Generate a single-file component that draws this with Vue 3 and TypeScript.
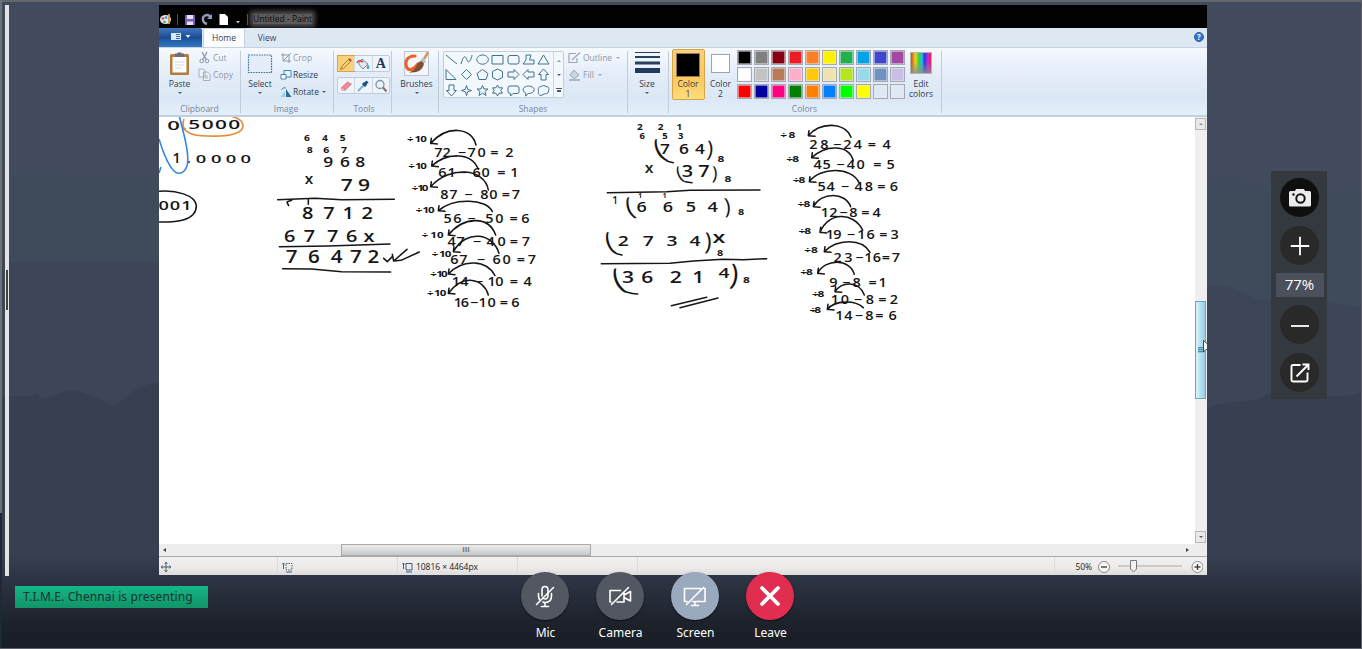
<script setup lang="ts">
interface Glyphs {
  t: string
  x: number[]
  y: number
  h: number
  w: number
  bold: boolean
}
interface Paren {
  t: string
  x: number
  y: number
  s: number
  r: number
}
interface Block {
  ox: number
  oy: number
  runs: Glyphs[]
  arcs: number[][]
  lines: string[]
  parens: Paren[]
}

const run = (t: string, x: number[], y: number, h = 26, w = 1.2): Glyphs => ({ t, x, y, h, w, bold: h < 22 })
const div10 = (a: number, b: number, y: number): Glyphs =>
  run('÷10', [a + 9, a + (b - a) * 0.54, b - 9], y, 20, 1.25)
const div8 = (a: number, b: number, y: number): Glyphs => run('÷8', [a + 11, b - 9], y, 20, 1.3)

const blocks: Block[] = [
  {
    ox: 155,
    oy: 115,
    runs: [
      run('0', [56], 45, 28, 1.7),
      run('.', [88], 45, 28, 1.2),
      run('5000', [118, 158, 198, 238], 43, 25, 1.8),
      run('1', [65], 144, 31, 1),
      run('.', [101], 144, 26, 1.2),
      run('0000', [138, 184, 228, 272], 144, 22, 1.8),
      run('001', [26, 60, 94], 284, 28, 1.4),
      run('645', [456, 510, 563], 79, 17, 1.3),
      run('867', [464, 514, 567], 113, 19, 1.2),
      run('968', [520, 570, 616], 156, 30, 1.25),
      run('x', [462], 206, 30, 1.1),
      run('79', [575, 627], 227, 35, 1.3),
      run('8712', [458, 522, 580, 637], 312, 36, 1.2),
      run('6776x', [404, 463, 533, 590, 642], 382, 33, 1.3),
      run('76472', [410, 477, 545, 603, 655], 445, 37, 1.2),
    ],
    arcs: [],
    lines: [
      'M368 254 L480 250 L560 254 L718 253',
      'M396 262 L401 272 M397 260 L410 256 M460 252 V268',
      'M373 395 L520 393 L705 387',
      'M383 461 L470 462 L560 470 L707 471',
      'M686 430 L697 440 L712 425 M712 418 L716 438 L756 403 M716 438 L738 436 L793 411',
      'M12 229 C60 224 122 240 124 272 C124 318 62 322 12 321',
    ],
    parens: [],
  },
  {
    ox: 400,
    oy: 120,
    runs: [
      div10(22, 80, 66), div10(26, 80, 148), div10(36, 84, 213), div10(48, 103, 280),
      div10(66, 130, 355), div10(96, 153, 412), div10(92, 142, 470), div10(82, 138, 528),
      run('72−70=2', [115, 140, 187, 215, 245, 283, 328], 110),
      run('61−60=1', [127, 155, 190, 230, 257, 304, 343], 171),
      run('87−80=7', [133, 160, 207, 253, 280, 318, 348], 237),
      run('56−50=6', [143, 172, 216, 268, 298, 341, 376], 310),
      run('47−40=7', [155, 182, 232, 272, 305, 342, 378], 377),
      run('67−60=7', [163, 190, 244, 290, 320, 363, 396], 431),
      run('14−10=4', [168, 193, 238, 275, 298, 342, 383], 498),
      run('16−10=6', [174, 195, 224, 248, 275, 312, 346], 561),
    ],
    arcs: [
      [228, 75, 215, 20, 140, 15, 92, 70],
      [235, 148, 215, 95, 140, 97, 95, 138],
      [265, 210, 255, 145, 150, 135, 92, 200],
      [277, 275, 260, 235, 160, 232, 115, 272],
      [287, 345, 265, 285, 190, 290, 145, 345],
      [297, 400, 280, 340, 200, 325, 160, 395],
      [285, 467, 260, 420, 190, 415, 145, 462],
      [265, 525, 250, 475, 190, 460, 145, 520],
    ],
    lines: [],
    parens: [],
  },
  {
    ox: 590,
    oy: 115,
    runs: [
      run('221', [150, 212, 268], 46, 18, 1.2),
      run('653', [157, 225, 272], 73, 17, 1.2),
      run('764', [225, 282, 330], 116, 31),
      run('8', [393], 142, 20, 1.3),
      run('x', [177], 175, 31, 1.1),
      run('37', [292, 342], 186, 33, 1.3),
      run('8', [414], 201, 20, 1.3),
      run('1', [75], 267, 24, 0.9),
      run('11', [150, 224], 250, 14, 1),
      run('6654', [155, 234, 303, 368], 292, 30, 1.3),
      run('8', [453], 300, 18, 1.3),
      run('2734', [100, 175, 246, 315], 392, 32, 1.3),
      run('x', [387], 384, 36, 1.4),
      run('8', [390], 422, 18, 1.3),
      run('3621', [114, 172, 257, 325], 503, 35, 1.3),
      run('4', [402], 488, 32, 1.3),
      run('8', [469], 504, 20, 1.3),
    ],
    arcs: [],
    lines: [
      'M52 233 L230 230 L300 226 L510 225',
      'M34 446 L240 445 L310 438 L400 433 L460 434 L530 431',
      'M244 572 L350 547 M270 578 L384 549',
      'M232 139 L250 143 M286 200 L306 203 M80 416 L96 420 M112 532 Q126 537 143 537',
    ],
    parens: [
      { t: '(', x: 209, y: 108, s: 84, r: -28 },
      { t: ')', x: 360, y: 106, s: 66, r: 4 },
      { t: '(', x: 270, y: 179, s: 58, r: -24 },
      { t: ')', x: 374, y: 178, s: 56, r: 2 },
      { t: '(', x: 120, y: 280, s: 76, r: -20 },
      { t: ')', x: 412, y: 278, s: 66, r: -4 },
      { t: '(', x: 60, y: 386, s: 80, r: -22 },
      { t: ')', x: 354, y: 384, s: 72, r: 2 },
      { t: '(', x: 86, y: 500, s: 92, r: -26 },
      { t: ')', x: 432, y: 484, s: 86, r: 6 },
    ],
  },
  {
    ox: 770,
    oy: 115,
    runs: [
      div8(30, 75, 70), div8(48, 86, 142), div8(68, 105, 203), div8(82, 120, 275),
      div8(85, 122, 358), div8(102, 142, 415), div8(90, 127, 480), div8(125, 162, 547),
      div8(118, 152, 593),
      run('28−24=4', [130, 163, 203, 232, 264, 306, 350], 101),
      run('45−40=5', [143, 170, 213, 243, 272, 322, 362], 161),
      run('54−48=6', [155, 182, 226, 266, 297, 334, 372], 229),
      run('12−8=4', [165, 190, 222, 250, 286, 320], 306),
      run('19−16=3', [180, 202, 244, 274, 302, 340, 374], 372),
      run('23−16=7', [203, 235, 270, 295, 321, 348, 378], 442),
      run('9−8=1', [190, 230, 260, 308, 338], 516),
      run('10−8=2', [195, 225, 265, 300, 337, 372], 567),
      run('14−8=6', [208, 235, 268, 298, 328, 368], 614),
    ],
    arcs: [
      [243, 67, 225, 20, 150, 20, 115, 62],
      [250, 137, 235, 85, 165, 90, 125, 128],
      [267, 203, 245, 155, 150, 155, 118, 200],
      [242, 275, 225, 230, 155, 230, 130, 275],
      [278, 345, 250, 290, 175, 290, 150, 352],
      [300, 412, 275, 368, 200, 372, 163, 410],
      [253, 478, 240, 430, 165, 430, 143, 475],
      [283, 540, 265, 495, 215, 500, 195, 530],
      [280, 578, 255, 555, 195, 555, 172, 583],
    ],
    lines: [],
    parens: [],
  },
]

const arcPath = (a: number[]): string =>
  `M${a[0]} ${a[1]} C${a[2]} ${a[3]} ${a[4]} ${a[5]} ${a[6]} ${a[7]}` +
  ` M${a[6] + 2} ${a[7] - 15} L${a[6]} ${a[7]} L${a[6] + 20} ${a[7] + 2}`
const xs = (g: Glyphs): string => g.x.map((v) => v / g.w).join(' ')

const palette: string[] = [
  '#000000', '#7f7f7f', '#880015', '#ed1c24', '#ff7f27', '#fff200', '#22b14c', '#00a2e8', '#3f48cc', '#a349a4',
  '#ffffff', '#c3c3c3', '#b97a57', '#ffaec9', '#ffc90e', '#efe4b0', '#b5e61d', '#99d9ea', '#7092be', '#c8bfe7',
  '#ff0000', '#0000a0', '#ff0080', '#008000', '#ff8000', '#0080ff', '#00ff00', '#ffff00', '#dfe9f4', '#dfe9f4',
]

const shapes: string[] = [
  'M1 2 L12 11', 'M1 11 C4 0 6 4 7 7 C8 11 11 8 12 2', 'M6.5 2 A5.8 4.6 0 1 0 6.6 2Z', 'M1 2.5H12V11H1Z',
  'M3 2.5H10Q12 2.5 12 4.5V9Q12 11 10 11H3Q1 11 1 9V4.5Q1 2.5 3 2.5Z', 'M4 2H9L7.5 7H12V11H1L4 7Z', 'M6.5 2L12 11H1Z',
  'M1 1.5V11.5H11Z', 'M6.5 1.5L11.5 6.5L6.5 11.5L1.5 6.5Z', 'M6.5 1.5L12 5.5L10 11.5H3L1 5.5Z',
  'M6.5 1L11.5 3.5V9.5L6.5 12L1.5 9.5V3.5Z', 'M1 4H7V1.5L12 6.5L7 11.5V9H1Z', 'M12 4H6V1.5L1 6.5L6 11.5V9H12Z',
  'M4 12V6.5H1.5L6.5 1L11.5 6.5H9V12Z',
  'M4 1V6.5H1.5L6.5 12L11.5 6.5H9V1Z', 'M6.5 1.5L7.7 5.3L11.5 6.5L7.7 7.7L6.5 11.5L5.3 7.7L1.5 6.5L5.3 5.3Z',
  'M6.5 1.5L8 5H12L9 7.5L10 11.5L6.5 9.2L3 11.5L4 7.5L1 5H5Z',
  'M6.5 1L8 3.8H11.5L9.8 6.5L11.5 9.2H8L6.5 12L5 9.2H1.5L3.2 6.5L1.5 3.8H5Z',
  'M3 2H10Q12 2 12 4V7.5Q12 9.5 10 9.5H6L3.5 12V9.5Q1 9.5 1 7.5V4Q1 2 3 2Z',
  'M6.5 2C14 2 14 9.5 6.5 9.5L3.5 12L3.8 9C-1 7 1 2 6.5 2Z',
  'M4 2.5C6 1 8 1.5 9 2.5C12 2.5 12.5 5 11.5 6.5C12 9 10 10 8.5 9.5L4 11.5C1.5 11 .5 9 1.8 7C.5 5 1.5 2.5 4 2.5Z',
]
</script>

<template>
  <div class="meeting">
    <svg class="backdrop" viewBox="0 0 1362 649" aria-hidden="true">
      <defs>
        <linearGradient id="floor" x1="0" y1="0" x2="0" y2="1">
          <stop offset="0" stop-color="#2f394a" stop-opacity="0" />
          <stop offset=".22" stop-color="#2e3545" />
          <stop offset=".75" stop-color="#1c212a" />
          <stop offset="1" stop-color="#191d25" />
        </linearGradient>
      </defs>
      <rect width="1362" height="649" fill="#424a5d" />
      <path d="M0 176 C60 170 100 180 159 178 L1207 179 C1260 181 1300 194 1362 190 V649 H0Z" fill="#3f4b5b" />
      <path d="M0 262 H159 L1207 287 C1222 282 1240 290 1258 300 L1320 302 C1340 303 1350 308 1362 307 V649 H0Z" fill="#3d4558" />
      <path d="M0 396 H32 L37 394 L41 398 C55 396 62 391 72 391 C90 392 103 402 114 406 C127 399 134 384 159 383 L1207 410 C1222 396 1250 408 1272 392 C1290 384 1320 406 1362 392 V649 H0Z" fill="#364050" />
      <rect y="555" width="1362" height="94" fill="url(#floor)" />
      <path d="M0 0H1362V2H0Z" fill="#63666b" />
      <path d="M0 0H2V513H0Z" fill="#6d7078" />
      <path d="M0 513H2V649H0Z" fill="#1c2a38" />
      <path d="M1361 0H1362V649H1361Z M0 648H1362V649H0Z" fill="#5c6068" />
    </svg>

    <div class="stage">
      <div class="splitter"><span class="grip"></span></div>

      <section class="paint">
        <header class="titlebar">
          <svg width="90" height="22" viewBox="0 0 90 22">
            <ellipse cx="6.500" cy="13.500" rx="5.500" ry="4.500" fill="#dce6ee" />
            <circle cx="4" cy="12.500" r="1.300" fill="#e04b3c" /><circle cx="7" cy="11.500" r="1.300" fill="#3c8fe0" /><circle cx="5.500" cy="16" r="1.300" fill="#4bb04b" />
            <path d="M10 8V18" stroke="#e6923c" stroke-width="1.800" />
            <path d="M18.500 8V19M88.500 8V19" stroke="#555" />
            <path d="M26 9H36V19H26Z" fill="#7b5cb8" /><path d="M28 9H34V13H28ZM28 15.500H34V19H28Z" fill="#e6e2f4" />
            <path d="M52 11C48 7 43 10 44 14Q44.500 17 48 18" fill="none" stroke="#8f9bb4" stroke-width="2.400" /><path d="M53 8V13H48Z" fill="#8f9bb4" />
            <path d="M60.500 8H66L69 11V19H60.500Z" fill="#fff" />
            <path d="M77 15H81L79 17.500Z" fill="#bbb" />
          </svg>
          <span class="title">Untitled - Paint</span>
        </header>

        <nav class="tabs">
          <span class="file">
            <svg width="42" height="18" viewBox="0 0 42 18"><path d="M12 5H22V12H12Z" fill="#dbe8f8" /><path d="M17 6.500H21M17 8.500H21M17 10.500H21" stroke="#3569ac" /><path d="M26.500 7H31.500L29 10Z" fill="#e2ecf8" /></svg>
          </span>
          <span class="tab active">Home</span>
          <span class="tab">View</span>
          <span class="help">?</span>
        </nav>

        <div class="ribbon">
          <div class="group clipboard">
            <div class="tools">
              <div class="big paste">
                <svg width="22" height="25" viewBox="0 0 22 25"><rect x="1" y="3" width="19" height="21" rx="1.500" fill="#b27c3c" /><path d="M3.500 6H17.500V21.500H3.500Z" fill="#fbfcfe" /><path d="M6 11H15M6 14H15M6 17H12" stroke="#d4dce6" /><path d="M6 2.500H8Q10.500 0 13 2.500H15V6H6Z" fill="#6d6f75" /></svg>
                <span>Paste</span><i class="caret"></i>
              </div>
              <div class="list faded">
                <div class="line"><svg width="13" height="13" viewBox="0 0 13 13"><path d="M4 1L8.500 9M9 1L4.500 9" stroke="#8c99ab" stroke-width="1.400" /><circle cx="3.700" cy="10" r="1.800" fill="none" stroke="#8c99ab" /><circle cx="9" cy="10" r="1.800" fill="none" stroke="#8c99ab" /></svg>Cut</div>
                <div class="line"><svg width="13" height="13" viewBox="0 0 13 13"><path d="M1 1H5L7 3V9H1ZM5.500 4H9.500L12 6.500V12.500H5.500Z" fill="#eef3f8" stroke="#a3afbf" /><path d="M7 8H10M7 10H10" stroke="#a3afbf" /></svg>Copy</div>
              </div>
            </div>
            <footer>Clipboard</footer>
          </div>

          <div class="group image">
            <div class="tools">
              <div class="big select">
                <svg width="26" height="25" viewBox="0 0 26 25"><rect x="1.500" y="4" width="23" height="17.500" fill="#e4eefa" stroke="#3f6e96" stroke-width="1.200" stroke-dasharray="1.600 1" /></svg>
                <span>Select</span><i class="caret"></i>
              </div>
              <div class="list three">
                <div class="line off"><svg width="12" height="12" viewBox="0 0 12 12"><path d="M3 1V9H11M1 3H9V11M3 9L11 1" fill="none" stroke="#8f9bac" /></svg>Crop</div>
                <div class="line"><svg width="12" height="12" viewBox="0 0 12 12"><path d="M4 1.500H11V8H4Z" fill="#e8f4fd" stroke="#3f84b0" /><path d="M1 5.500H6V10H1Z" fill="#fff" stroke="#3f84b0" /></svg>Resize</div>
                <div class="line"><svg width="12" height="12" viewBox="0 0 12 12"><path d="M6 3L11.500 11H6Z" fill="#2d6a9c" /><path d="M5 5V11H1Z" fill="#9ec9e6" /><path d="M1.500 4Q3 .5 6 2" fill="none" stroke="#3f84b0" /></svg>Rotate<i class="caret side"></i></div>
              </div>
            </div>
            <footer>Image</footer>
          </div>

          <div class="group toolbox">
            <div class="toolrows">
              <div class="toolrow">
                <span class="cell on"><svg width="16" height="16" viewBox="0 0 16 16"><path d="M2.500 13.500L4 10L11.500 2.500L13.500 4.500L6 12Z" fill="#f7cf6a" stroke="#9a6a2c" stroke-width=".8" /><path d="M11 3L13 5" stroke="#c0504d" stroke-width="2" /></svg></span>
                <span class="cell"><svg width="16" height="16" viewBox="0 0 16 16"><path d="M7 3L13 8L8 13L3.500 8Z" fill="#e3e8ee" stroke="#7b8796" /><path d="M2 7Q3.500 3 8 6" fill="none" stroke="#c44" stroke-width="1.600" /><path d="M13 9Q15 13 13 13T13 9Z" fill="#48a0dc" stroke="#48a0dc" /></svg></span>
                <span class="cell letter">A</span>
              </div>
              <div class="toolrow">
                <span class="cell"><svg width="16" height="16" viewBox="0 0 16 16"><path d="M3 10L9.500 4L13.500 6L7 12.500H4Z" fill="#ee8a90" stroke="#c9686c" stroke-width=".7" /><path d="M3 10L7 12.500H4Z" fill="#fbd7d9" /></svg></span>
                <span class="cell"><svg width="16" height="16" viewBox="0 0 16 16"><path d="M3 13L9 7" stroke="#7fb2dc" stroke-width="2.200" /><path d="M8 5L11 8M9.500 6.500L12.500 3.500" stroke="#1f4f86" stroke-width="3" /></svg></span>
                <span class="cell"><svg width="16" height="16" viewBox="0 0 16 16"><circle cx="7" cy="6.500" r="4" fill="#e6f2fb" stroke="#8592a3" stroke-width="1.300" /><path d="M10 9.500L13.500 13.500" stroke="#8b6f5c" stroke-width="2" /></svg></span>
              </div>
            </div>
            <footer>Tools</footer>
          </div>

          <div class="group brushes">
            <div class="big">
              <svg width="25" height="25" viewBox="0 0 25 25"><rect x=".5" y=".5" width="24" height="24" fill="#f4f6f9" stroke="#b9c5d3" /><path d="M11 5C1 5 1 13 3 17C6 21 11 17 14 13" fill="none" stroke="#e8632c" stroke-width="3.200" stroke-linecap="round" /><path d="M24 1.500L20 8" stroke="#c79a62" stroke-width="2.600" /><path d="M20 11Q20 17 15 20Q10 22 5 21.500Q11 19 12.500 15Q14 11 17 10Z" fill="#7d4f33" /><path d="M17.500 8L21 11.500" stroke="#b8bfc9" stroke-width="3" /></svg>
              <span>Brushes</span><i class="caret"></i>
            </div>
          </div>

          <div class="group shapes">
            <div class="shaperow">
              <div class="gallery">
                <div class="glyphs">
                  <svg v-for="(d, i) in shapes" :key="i" width="13" height="13" viewBox="0 0 13 13"><path :d="d" fill="none" stroke="#3d7391" /></svg>
                </div>
                <div class="scroller"><i class="caret up"></i><i class="caret"></i><i class="caret more"></i></div>
              </div>
              <div class="list faded">
                <div class="line"><svg width="13" height="13" viewBox="0 0 13 13"><path d="M1 2.500H8M1 2.500V11.500H9V7M4 9L12 1.500" fill="none" stroke="#9aa6b6" stroke-width="1.200" /></svg>Outline<i class="caret side"></i></div>
                <div class="line"><svg width="13" height="13" viewBox="0 0 13 13"><path d="M6 2L11 7L6 11L2 7Z" fill="#ccd5df" stroke="#9aa6b6" /><path d="M1 12H12" stroke="#9aa6b6" stroke-width="1.500" /></svg>Fill<i class="caret side"></i></div>
              </div>
            </div>
            <footer>Shapes</footer>
          </div>

          <div class="group size">
            <div class="big">
              <svg width="25" height="25" viewBox="0 0 25 25"><path d="M0 1.500H25" stroke="#28415f" /><path d="M0 6H25" stroke="#28415f" stroke-width="2" /><path d="M0 12H25" stroke="#28415f" stroke-width="3" /><path d="M0 19.500H25" stroke="#1f3c5e" stroke-width="5" /></svg>
              <span>Size</span><i class="caret"></i>
            </div>
          </div>

          <div class="group colors">
            <div class="colorrow">
              <div class="chip picked"><b class="swatch black"></b><span>Color</span><span>1</span></div>
              <div class="chip"><b class="swatch white"></b><span>Color</span><span>2</span></div>
              <div class="palette"><b v-for="(c, i) in palette" :key="i" :style="{ backgroundColor: c }"></b></div>
              <div class="chip edit"><b class="rainbow"></b><span>Edit</span><span>colors</span></div>
            </div>
            <footer>Colors</footer>
          </div>
        </div>

        <div class="workspace">
          <svg class="canvas" width="1036" height="427" viewBox="159 117 1036 427">
            <g v-for="(b, bi) in blocks" :key="bi" :transform="`translate(${b.ox} ${b.oy}) scale(.33333)`">
              <text
                v-for="(g, gi) in b.runs"
                :key="gi"
                :class="['ink', { heavy: g.bold }]"
                :transform="`translate(0 ${g.y}) scale(${g.w} 1)`"
                :x="xs(g)"
                y="0"
                :font-size="g.h / 0.72"
              >{{ g.t }}</text>
              <text
                v-for="(p, pi) in b.parens"
                :key="'p' + pi"
                class="ink paren"
                :transform="`translate(${p.x} ${p.y}) rotate(${p.r})`"
                :y="p.s * 0.28"
                :font-size="p.s"
              >{{ p.t }}</text>
              <path v-for="(a, ai) in b.arcs" :key="'a' + ai" class="stroke" :d="arcPath(a)" />
              <path v-for="(l, li) in b.lines" :key="'l' + li" class="stroke" :d="l" />
            </g>
            <path d="M184 119 C180 130 188 136 208 136 C230 137 243 133 243 126 C243 119 233 116 224 115" fill="none" stroke="#e58a35" stroke-width="1.600" />
            <path d="M179 115 C184 135 190 155 187 166 C184 174 178 175 174 171 C168 165 163 152 159 139 M159 173 L161 167" fill="none" stroke="#3587dc" stroke-width="1.600" />
          </svg>
          <div class="vscroll">
            <span class="arrow top"><i class="caret up"></i></span>
            <span class="vthumb"><i></i></span>
            <span class="arrow bottom"><i class="caret"></i></span>
            <svg class="pointer" width="5" height="14" viewBox="0 0 5 14"><path d="M.5 .5V12L3 9.500H5V4.500Z" fill="#fff" stroke="#222" stroke-width=".8" /></svg>
          </div>
        </div>

        <div class="hscroll">
          <i class="tri left"></i>
          <span class="hthumb">ııı</span>
          <i class="tri right"></i>
        </div>

        <div class="status">
          <span class="seg first"><svg width="10" height="10" viewBox="0 0 10 10"><path d="M5 0V10M0 5H10M3.500 1.500L5 .5L6.500 1.500M3.500 8.500L5 9.500L6.500 8.500M1.500 3.500L.5 5L1.500 6.500M8.500 3.500L9.500 5L8.500 6.500" fill="none" stroke="#4a5b70" /></svg></span>
          <span class="seg"><svg width="11" height="11" viewBox="0 0 11 11"><path d="M1.500 1V7M0 2.500L1.500 1L3 2.500M4 10H10" fill="none" stroke="#4c617b" /><path d="M4 1.500H10V8H4Z" fill="none" stroke="#4c617b" stroke-dasharray="1.500 1" /></svg></span>
          <span class="seg"><svg width="11" height="11" viewBox="0 0 11 11"><path d="M1.500 1V7M0 2.500L1.500 1L3 2.500M4 10H10M4 1.500H10V8H4Z" fill="none" stroke="#3f5f86" /></svg>10816 × 4464px</span>
          <span class="seg"></span>
          <span class="seg wide"></span>
          <span class="zoombox">50%
            <svg width="106" height="16" viewBox="0 0 106 16">
              <circle cx="7" cy="8" r="5.500" fill="#f8f8f8" stroke="#8b8b8b" /><path d="M4 8H10" stroke="#444" stroke-width="1.400" />
              <path d="M21 7H85" stroke="#aaa" />
              <path d="M33.500 1.500H39.500V10L36.500 13L33.500 10Z" fill="#f2f2f2" stroke="#777" />
              <circle cx="100.500" cy="8" r="5.500" fill="#f8f8f8" stroke="#8b8b8b" /><path d="M97.500 8H103.500M100.500 5V11" stroke="#444" stroke-width="1.400" />
            </svg>
          </span>
        </div>
      </section>

      <aside class="zoom">
        <span class="round dark"><svg width="24" height="20" viewBox="0 0 24 20"><path d="M2.500 3H7L8 1H16L17 3H21.500Q23 3 23 4.500V17Q23 18.500 21.500 18.500H2.500Q1 18.500 1 17V4.500Q1 3 2.500 3Z" fill="#ececec" /><circle cx="12.500" cy="10.500" r="4.200" fill="#ececec" stroke="#111" stroke-width="2" /><circle cx="5.500" cy="6.500" r="1.200" fill="#111" /></svg></span>
        <span class="round plus"><svg width="20" height="20" viewBox="0 0 20 20"><path d="M10 .8V19.200M.8 10H19.200" stroke="#fff" stroke-width="1.800" /></svg></span>
        <span class="percent">77%</span>
        <span class="round"><svg width="20" height="20" viewBox="0 0 20 20"><path d="M1 11H19" stroke="#fff" stroke-width="1.800" /></svg></span>
        <span class="round"><svg width="20" height="20" viewBox="0 0 20 20"><path d="M10.500 2H3Q1.500 2 1.500 3.500V17Q1.500 18.500 3 18.500H16Q17.500 18.500 17.500 17V9.500M6.500 13.500L18 2M12.500 1.500H18.500V7" fill="none" stroke="#fff" stroke-width="1.900" /></svg></span>
      </aside>
    </div>

    <div class="presenter">T.I.M.E. Chennai is presenting</div>

    <div class="controls">
      <div class="control">
        <span class="disc"><svg width="24" height="24" viewBox="0 0 24 24"><g fill="none" stroke="#fff" stroke-width="1.600" stroke-linecap="round"><path d="M9 12V6Q9 2.500 12 2.500T15 6V11Q15 15 12 15Q10.500 15 10 14" /><path d="M5.500 9.500V12Q5.500 14.500 7 16M18.500 9.500V12Q18.500 18.500 12 18.500Q10.800 18.500 10 18M12 18.500V22M8.500 22.500H15.500M3.500 20.500L20.500 3.500" /></g></svg></span>
        <span class="name">Mic</span>
      </div>
      <div class="control">
        <span class="disc"><svg width="26" height="24" viewBox="0 0 26 24"><g fill="none" stroke="#fff" stroke-width="1.600" stroke-linejoin="round" stroke-linecap="round"><path d="M13.500 6.500H3V18H4M10 18H17V9M17 11L23.500 7.500V17L17 13.500M4.500 20.500L21.500 3.500" /></g></svg></span>
        <span class="name">Camera</span>
      </div>
      <div class="control">
        <span class="disc light"><svg width="26" height="24" viewBox="0 0 26 24"><g fill="none" stroke="#fff" stroke-width="1.600" stroke-linejoin="round" stroke-linecap="round"><path d="M18.500 4.500H2.500V17.500H5M22 4.500H23V17.500H10.500M13 17.500V21M9.500 21.500H16.500M4.500 20.500L21.500 3.500" /></g></svg></span>
        <span class="name">Screen</span>
      </div>
      <div class="control">
        <span class="disc red"><svg width="22" height="22" viewBox="0 0 22 22"><path d="M3 3L19 19M19 3L3 19" stroke="#fff" stroke-width="3.800" stroke-linecap="round" /></svg></span>
        <span class="name">Leave</span>
      </div>
    </div>
  </div>
</template>

<style>
body {
  margin: 0;
  background: #191d25;
  overflow: hidden;
}
</style>

<style scoped>
.meeting {
  position: relative;
  width: 1362px;
  height: 649px;
  overflow: hidden;
  font-family: 'Noto Sans', 'Open Sans', sans-serif;
}
.meeting * {
  box-sizing: border-box;
}
svg {
  display: block;
  flex: none;
}
.backdrop {
  position: absolute;
  inset: 0;
  width: 1362px;
  height: 649px;
}
.stage {
  position: relative;
  display: flex;
  height: 576px;
  padding: 5px 0 0 5px;
}
.splitter {
  width: 4px;
  height: 571px;
  margin-right: 150px;
  padding: 265px 1px 0;
  background: #e3e3e1;
}
.grip {
  display: block;
  height: 40px;
  background: #41413e;
}
.paint {
  display: flex;
  flex-direction: column;
  width: 1048px;
  height: 570px;
  overflow: hidden;
  background: #fff;
  font: 8.500px/10px 'Open Sans', 'Noto Sans', sans-serif;
  color: #2f3c4f;
}
.titlebar {
  display: flex;
  flex: none;
  align-items: center;
  height: 23px;
  background: #020202;
}
.title {
  margin: 5px 0 0 4px;
  line-height: 10px;
  color: #0c0c0c;
  background: #5a5a5a;
  box-shadow: 0 0 5px 3px #505050;
}
.tabs {
  position: relative;
  display: flex;
  flex: none;
  height: 19px;
  background: #dde8f3;
}
.file {
  width: 43px;
  border-radius: 0 2px 0 0;
  background: linear-gradient(#4177bd, #1c4c94 50%, #2f79c4);
}
.tab {
  width: 42px;
  margin-left: 1px;
  line-height: 19px;
  text-align: center;
  color: #35435a;
}
.active {
  border: 1px solid #c3d0e0;
  border-bottom: 0;
  line-height: 18px;
  background: #fafcfe;
}
.help {
  width: 10px;
  height: 10px;
  margin: 4px 3px 0 auto;
  border: 1px solid #2860ae;
  border-radius: 50%;
  font-weight: 700;
  font-size: 8px;
  line-height: 8px;
  text-align: center;
  color: #fff;
  background: #3572c4;
}
.ribbon {
  display: flex;
  flex: none;
  height: 70px;
  border-top: 1px solid #c6d3e2;
  border-bottom: 2px solid #c2cfdd;
  background: linear-gradient(#f6fafe, #e5eef9 35%, #dbe7f5 75%, #e4f0fb);
}
.group {
  position: relative;
  display: flex;
  flex-direction: column;
  border-right: 1px solid #c0ccda;
  margin: 3px 0 2px;
  height: 62px;
}
.group footer {
  margin-top: auto;
  height: 9px;
  line-height: 9px;
  text-align: center;
  color: #76879c;
}
.tools {
  display: flex;
}
.big {
  display: flex;
  flex-direction: column;
  align-items: center;
}
.big span {
  margin-top: 3px;
  line-height: 10px;
}
.caret {
  width: 0;
  height: 0;
  margin-top: 3px;
  border: 2px solid transparent;
  border-top: 2.500px solid #4c5a6c;
  border-bottom: 0;
}
.caret.side {
  margin: 0 0 0 2px;
}
.faded .caret.side {
  border-top-color: #9aa6b6;
}
.caret.up {
  border-top: 0;
  border-bottom: 2.500px solid #8795a8;
}
.caret.more {
  width: 6px;
  height: 5px;
  border: 0;
  border-top: 1px solid #4c5a6c;
  background: linear-gradient(#4c5a6c, #4c5a6c) center 1px / 4px 2px no-repeat;
}
.list {
  display: flex;
  flex-direction: column;
  gap: 4px;
}
.line {
  display: flex;
  align-items: center;
  gap: 2px;
  height: 13px;
  white-space: nowrap;
}
.three .line {
  gap: 1px;
}
.faded,
.off {
  color: #8c98a8;
}
.clipboard {
  width: 82px;
  padding-left: 8px;
}
.clipboard footer {
  margin-right: 8px;
}
.paste {
  width: 25px;
  margin-right: 6px;
}
.image {
  width: 93px;
  padding-left: 4px;
}
.image footer {
  margin-right: 6px;
}
.select {
  width: 30px;
  margin-right: 5px;
}
.toolbox {
  width: 58px;
  padding-left: 3px;
}
.toolrows {
  display: flex;
  flex-direction: column;
  gap: 5px;
  padding-top: 4px;
}
.toolrow {
  display: flex;
  width: 53px;
  height: 17px;
  border: 1px solid #bfcbd9;
  border-radius: 2px;
  background: #eef4fb;
}
.cell {
  display: flex;
  flex: 1;
  align-items: center;
  justify-content: center;
}
.cell + .cell {
  border-left: 1px solid #ced8e4;
}
.on {
  background: #fbd177;
  box-shadow: 0 0 0 1px #d2a54a;
}
.letter {
  font: 700 14px/14px 'Liberation Serif', serif;
  color: #1f3659;
}
.brushes {
  width: 47px;
  padding-left: 3px;
}
.shapes {
  width: 189px;
  padding-left: 4px;
}
.shapes footer {
  margin-right: 4px;
}
.shaperow {
  display: flex;
}
.gallery {
  display: flex;
  width: 121px;
  height: 47px;
  margin-right: 4px;
  border: 1px solid #c2cedc;
  border-radius: 2px;
  background: #f3f8fd;
}
.glyphs {
  display: grid;
  grid-template-columns: repeat(7, 15.400px);
  grid-auto-rows: 15.300px;
  width: 109px;
  padding-left: 1px;
  align-items: center;
}
.scroller {
  display: flex;
  flex: 1;
  flex-direction: column;
  align-items: center;
  justify-content: space-around;
  border-left: 1px solid #ced8e4;
}
.size {
  width: 41px;
}
.size .big {
  margin-right: 2px;
}
.colors {
  width: 273px;
}
.colors footer {
  margin-right: 1px;
}
.colorrow {
  display: flex;
}
.chip {
  display: flex;
  flex-direction: column;
  align-items: center;
  width: 33px;
  height: 51px;
  margin-top: -2px;
  padding: 5px 2px 0 0;
}
.picked {
  margin-left: 3px;
  padding: 3px 1px 0 0;
  border: 1px solid #d8a445;
  border-radius: 2px;
  background: linear-gradient(#f9cf82, #fcc95e 60%, #fddc7c);
}
.swatch {
  width: 19px;
  height: 19px;
  margin-bottom: 6px;
  border: 1px solid #9aa6b4;
}
.black {
  width: 24px;
  height: 24px;
  margin-bottom: 2px;
  border-color: #8e7a52;
  background: #000;
}
.white {
  background: #fff;
}
.palette {
  display: grid;
  grid-template-columns: repeat(10, 15px);
  grid-auto-rows: 15px;
  gap: 2px;
  margin: -1px 0 0 -1px;
}
.palette b {
  border: 1px solid #a5aab2;
  box-shadow: inset 0 0 0 0.500px #e8ecf2;
}
.edit {
  width: 32px;
  padding: 3px 0 0;
}
.rainbow {
  width: 22px;
  height: 22px;
  margin-bottom: 5px;
  border: 1px solid #b4b4ae;
  background: linear-gradient(transparent 45%, #8a8f90cc), linear-gradient(90deg, #d4491f, #e8d51c 22%, #32d23c 40%, #24b8e8 55%, #2b35e0 68%, #d226d8 85%, #e0204c);
}
.workspace {
  display: flex;
  flex: none;
  height: 427px;
}
.canvas {
  background: #fff;
}
.ink {
  font-family: 'Open Sans', 'Noto Sans', sans-serif;
  font-weight: 600;
  text-anchor: middle;
  fill: #161616;
}
.heavy {
  font-weight: 700;
}
.paren {
  font-weight: 400;
}
.stroke {
  fill: none;
  stroke: #161616;
  stroke-width: 4.600;
  stroke-linecap: round;
  stroke-linejoin: round;
}
.vscroll {
  position: relative;
  display: flex;
  flex-direction: column;
  align-items: flex-start;
  width: 12px;
  padding: 1px 0;
  background: #efefef;
}
.arrow {
  display: flex;
  align-items: center;
  justify-content: center;
  width: 11px;
  height: 12px;
  border: 1px solid #b8b8b8;
  background: #e9e9e9;
}
.arrow .caret {
  margin: 0;
}
.vthumb {
  display: flex;
  align-items: center;
  justify-content: center;
  width: 11px;
  height: 98px;
  margin: 171px 0 auto;
  border: 1px solid #6fa3b8;
  background: linear-gradient(90deg, #dff3fb, #b4e0f1 50%, #98cee4);
}
.vthumb i {
  width: 6px;
  height: 6px;
  background: repeating-linear-gradient(#4a8ca6 0 1px, #8fc4d8 1px 2px);
}
.pointer {
  position: absolute;
  right: -1px;
  top: 223px;
}
.hscroll {
  display: flex;
  flex: none;
  align-items: center;
  height: 12px;
  padding: 0 18px 0 4px;
  background: #ededed;
}
.tri {
  border: 2.500px solid transparent;
}
.left {
  border-left: 0;
  border-right: 3px solid #444;
}
.right {
  margin-left: auto;
  border-right: 0;
  border-left: 3px solid #444;
}
.hthumb {
  width: 250px;
  height: 12px;
  margin-left: 175px;
  border: 1px solid #a9aaac;
  font: 700 8px/8px 'Open Sans', sans-serif;
  text-align: center;
  color: #777;
  background: linear-gradient(#ececec, #d9dadb 50%, #c6c8ca);
}
.status {
  display: flex;
  flex: none;
  height: 19px;
  border-top: 1px solid #a9a9a9;
  line-height: 16px;
  color: #222;
  background: linear-gradient(#f1f0ef, #ecebea 60%, #dddcdb);
}
.seg {
  display: flex;
  align-items: center;
  gap: 3px;
  width: 120px;
  padding: 2px 0 0 4px;
  border-right: 1px solid #dcdbda;
  letter-spacing: -0.050px;
  white-space: nowrap;
}
.first {
  width: 119px;
  padding-left: 2px;
}
.wide {
  width: 417px;
}
.zoombox {
  display: flex;
  align-items: center;
  gap: 5px;
  margin-left: auto;
  padding: 2px 4px 0 0;
  letter-spacing: -0.100px;
}
.zoom {
  display: flex;
  flex-direction: column;
  align-items: center;
  width: 56px;
  height: 228px;
  margin: 166px 0 0 64px;
  padding: 7px 0 0 1px;
  background: #34393f;
}
.round {
  display: flex;
  flex: none;
  align-items: center;
  justify-content: center;
  width: 39px;
  height: 39px;
  margin-bottom: 9px;
  border-radius: 50%;
  background: #292929;
}
.plus {
  margin-bottom: 8px;
}
.dark {
  background: #0f0f0f;
}
.percent {
  flex: none;
  width: 48px;
  height: 24px;
  margin-bottom: 8px;
  font: 15px/23px 'Open Sans', 'Noto Sans', sans-serif;
  text-align: center;
  color: #fff;
  background: #4a505c;
}
.presenter {
  position: relative;
  width: 193px;
  height: 22px;
  margin: 10px 0 0 15px;
  padding-left: 8px;
  font-size: 12px;
  line-height: 21px;
  letter-spacing: 0.120px;
  white-space: nowrap;
  color: #14342c;
  background: linear-gradient(#15b687, #119468);
}
.controls {
  position: absolute;
  left: 507px;
  top: 572px;
  display: flex;
}
.control {
  display: flex;
  flex-direction: column;
  align-items: center;
  width: 75px;
  font-size: 12px;
  line-height: 16px;
  color: #fff;
}
.name {
  padding-left: 2px;
}
.disc {
  display: flex;
  align-items: center;
  justify-content: center;
  width: 48px;
  height: 48px;
  margin-bottom: 5px;
  border-radius: 50%;
  background: #525762;
  box-shadow: 0 1px 2px #0008;
}
.light {
  background: #9aa9bd;
}
.red {
  background: #e12d50;
}
</style>
